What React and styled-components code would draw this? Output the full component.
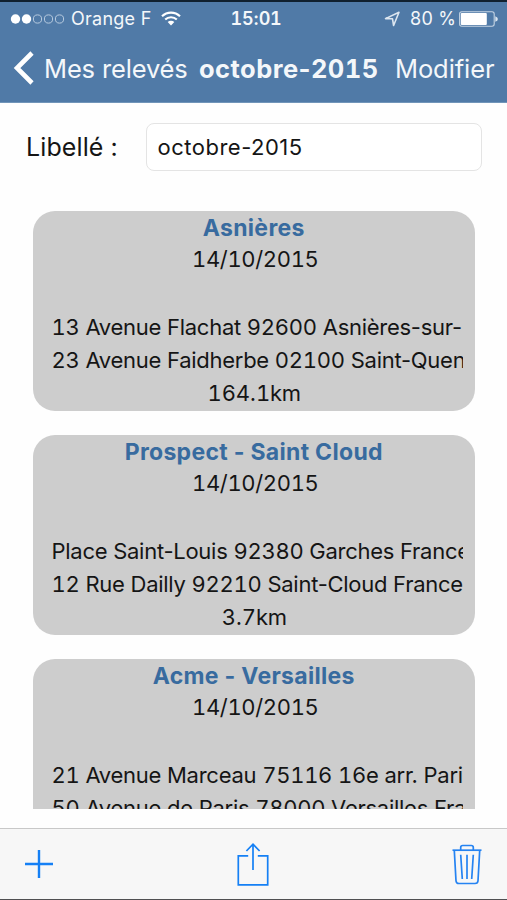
import styled, { createGlobalStyle } from "styled-components";
import { useState } from "react";

const trips = [
  {
    title: "Asnières",
    date: "14/10/2015",
    from: "13 Avenue Flachat 92600 Asnières-sur-",
    to: "23 Avenue Faidherbe 02100 Saint-Quentin",
    distance: "164.1km",
  },
  {
    title: "Prospect - Saint Cloud",
    date: "14/10/2015",
    from: "Place Saint-Louis 92380 Garches France",
    to: "12 Rue Dailly 92210 Saint-Cloud France",
    distance: "3.7km",
  },
  {
    title: "Acme - Versailles",
    date: "14/10/2015",
    from: "21 Avenue Marceau 75116 16e arr. Paris",
    to: "50 Avenue de Paris 78000 Versailles France",
    distance: "",
  },
];

// tabular figures for the digits only, the hyphens keep their normal width
const Figures = ({ text }) =>
  text
    .split(/(\d+)/)
    .map((part, i) => (i % 2 ? <Digits key={i}>{part}</Digits> : part));

const StatusBar = () => (
  <StyledStatus>
    <Carrier>
      <svg width="55" height="12" viewBox="0 0 55 12">
        <circle cx="5.5" cy="6" r="4.7" fill="#fff" />
        <circle cx="16.5" cy="6" r="4.7" fill="#fff" />
        <g fill="none" stroke="#b9cce0" strokeWidth="1">
          <circle cx="27.5" cy="6" r="4.1" />
          <circle cx="38.5" cy="6" r="4.1" />
          <circle cx="49.5" cy="6" r="4.1" />
        </g>
      </svg>
      <StatusText $width={84}>Orange F</StatusText>
      <svg width="20" height="15" viewBox="0 0 20 15">
        <g fill="none" stroke="#fff" strokeWidth="2.1">
          <path d="M1 5.3a12.8 12.8 0 0 1 18 0" />
          <path d="M4.2 8.6a8.2 8.2 0 0 1 11.6 0" />
        </g>
        <path d="M6.7 11.1a4.7 4.7 0 0 1 6.6 0L10 14.4z" fill="#fff" />
      </svg>
    </Carrier>
    <Clock>
      <Figures text="15:01" />
    </Clock>
    <Battery>
      <svg width="16" height="16" viewBox="0 0 16 16">
        <path
          d="M1.500 7.600 15 1.300l-5.400 13.200-1.100-6.700z"
          fill="none"
          stroke="#dce6f0"
          strokeWidth="1.6"
          strokeLinejoin="round"
        />
      </svg>
      <StatusText $width={44}>80 %</StatusText>
      <svg width="40" height="16" viewBox="0 0 40 16">
        <rect
          x="0.6"
          y="0.7"
          width="34.6"
          height="14.6"
          rx="2.2"
          fill="none"
          stroke="#c4d3e3"
          strokeWidth="1.1"
        />
        <rect x="1.8" y="1.9" width="26" height="12.2" rx="1" fill="#fff" />
        <path d="M36.3 5.2q2.6.9 2.6 2.8t-2.6 2.8z" fill="#dce6f0" />
      </svg>
    </Battery>
  </StyledStatus>
);

const Trip = ({ trip }) => (
  <Card>
    <CardTitle>{trip.title}</CardTitle>
    <CardDate>
      <Figures text={trip.date} />
    </CardDate>
    <Addresses>
      <Address>
        <Figures text={trip.from} />
      </Address>
      <Address>
        <Figures text={trip.to} />
      </Address>
    </Addresses>
    <CardLine>
      <Figures text={trip.distance} />
    </CardLine>
  </Card>
);

const App = () => {
  const [label, setLabel] = useState("octobre-2015");

  return (
    <Screen>
      <GlobalStyle />
      <Header>
        <StatusBar />
        <NavBar>
          <BackButton>
            <svg width="22" height="34" viewBox="0 0 22 34">
              <path d="M19 2 4 17l15 15" fill="none" stroke="#fff" strokeWidth="4.6" />
            </svg>
            <span>Mes relevés</span>
          </BackButton>
          <NavTitle>
            <Figures text="octobre-2015" />
          </NavTitle>
          <EditButton>Modifier</EditButton>
        </NavBar>
      </Header>
      <LabelRow>
        <label htmlFor="label">Libellé :</label>
        <input id="label" value={label} onChange={(e) => setLabel(e.target.value)} />
      </LabelRow>
      <List>
        {trips.map((trip) => (
          <Trip key={trip.title} trip={trip} />
        ))}
      </List>
      <Toolbar>
        <ToolButton aria-label="Ajouter">
          <svg width="28" height="28" viewBox="0 0 28 28">
            <path d="M14 0v28M0 14h28" fill="none" stroke="#1580f5" strokeWidth="2.4" />
          </svg>
        </ToolButton>
        <ToolButton aria-label="Partager">
          <svg width="32" height="44" viewBox="0 0 32 44">
            <g fill="none" stroke="#1580f5" strokeWidth="1.7">
              <path d="M11.2 13.8H1.3v29h29.4v-29h-9.9" />
              <path d="M16 28V2M9.4 9 16 2.2 22.6 9" />
            </g>
          </svg>
        </ToolButton>
        <ToolButton aria-label="Supprimer">
          <svg width="30" height="41" viewBox="0 0 30 41">
            <g fill="none" stroke="#2583f2" strokeWidth="1.7">
              <path d="M.5 6.2h29" />
              <path d="M8.7 6V3.5q0-2 2-2h8.6q2 0 2 2V6" />
              <path d="M2.3 6.5 4 36.7q.2 2.8 3 2.8h16q2.8 0 3-2.8L27.7 6.5" />
              <path d="M8.7 10.8 10.3 35M15 10.8V35M21.3 10.8 19.7 35" />
            </g>
          </svg>
        </ToolButton>
      </Toolbar>
    </Screen>
  );
};

const GlobalStyle = createGlobalStyle`
  * {
    box-sizing: border-box;
  }
  body {
    margin: 0;
    font-family: Inter, "Liberation Sans", sans-serif;
  }
`;

const Screen = styled.div`
  display: flex;
  flex-direction: column;
  width: 507px;
  height: 900px;
  overflow: hidden;
  background: #fefefe;
  color: #151515;
  border-bottom: 1px solid #505052;
`;

const Digits = styled.span`
  font-variant-numeric: tabular-nums;
`;

const Header = styled.header`
  height: 103px;
  flex: none;
  background: #507aa7;
  border-top: 2px solid #10202f;
  border-bottom: 1px solid #7195b9;
  color: #f4f7fa;
`;

const StyledStatus = styled.div`
  display: grid;
  grid-template-columns: 1fr auto 1fr;
  align-items: center;
  height: 33px;
  padding: 0 8px 0 10px;
`;

const Carrier = styled.div`
  display: flex;
  align-items: center;
  gap: 6px;
  svg {
    flex: none;
  }
`;

const Battery = styled(Carrier)`
  justify-content: flex-end;
  gap: 5px;
  svg:first-child {
    margin-right: 5px;
  }
`;

const StatusText = styled.span`
  width: ${(props) => props.$width}px;
  font-size: 18px;
  letter-spacing: 0.25px;
  white-space: nowrap;
`;

const Clock = styled.div`
  padding-left: 3px;
  font-size: 18px;
  font-weight: 600;
  letter-spacing: -0.3px;
`;

const NavBar = styled.nav`
  display: flex;
  align-items: center;
  height: 66px;
  padding: 0 13px;
  font-size: 25.5px;
  white-space: nowrap;
`;

const BackButton = styled.div`
  display: flex;
  align-items: center;
  gap: 9px;
  width: 186px;
  letter-spacing: -0.15px;
  svg {
    flex: none;
  }
`;

const NavTitle = styled.div`
  width: 196px;
  font-weight: 650;
  letter-spacing: 0.45px;
`;

const EditButton = styled.div`
  width: 99px;
  letter-spacing: -0.1px;
`;

const LabelRow = styled.div`
  display: flex;
  align-items: center;
  flex: none;
  height: 107.5px;
  padding: 0 25px 19px 26px;
  label {
    width: 120px;
    font-size: 25px;
    letter-spacing: 0.1px;
  }
  input {
    width: 336px;
    height: 48px;
    padding: 0 10.5px;
    border: 1.5px solid #e4e4e4;
    border-radius: 8px;
    background: #fff;
    color: #151515;
    font-family: Inter, "Liberation Sans", sans-serif;
    font-size: 22px;
    letter-spacing: 0.5px;
  }
`;

const List = styled.main`
  display: flex;
  flex-direction: column;
  gap: 24px;
  height: 598.5px;
  flex: none;
  padding: 0 32px 0 32.5px;
  overflow: hidden;
`;

const Card = styled.section`
  flex: none;
  height: 200.3px;
  padding-top: 1px;
  border-radius: 22px;
  background: #cdcdcd;
  text-align: center;
`;

const CardTitle = styled.div`
  font-size: 23px;
  font-weight: 650;
  line-height: 32px;
  letter-spacing: 0.3px;
  color: #386b9f;
`;

const CardLine = styled.div`
  padding-left: 1px;
  font-size: 22px;
  line-height: 33px;
  letter-spacing: -0.2px;
`;

const CardDate = styled(CardLine)`
  padding-left: 3px;
  line-height: 31.5px;
  letter-spacing: -0.35px;
`;

const Addresses = styled.div`
  margin: 35.5px 12.5px 0 19px;
  text-align: left;
`;

const Address = styled.div`
  overflow: hidden;
  font-size: 22px;
  line-height: 33px;
  letter-spacing: -0.27px;
  white-space: nowrap;
`;

const Toolbar = styled.footer`
  display: flex;
  align-items: center;
  justify-content: space-between;
  height: 71px;
  flex: none;
  margin-top: 19px;
  padding: 0 25px;
  border-top: 1px solid #c8c8c8;
  background: #f7f7f7;
`;

const ToolButton = styled.button`
  display: flex;
  padding: 0;
  border: none;
  background: none;
`;

export default App;
